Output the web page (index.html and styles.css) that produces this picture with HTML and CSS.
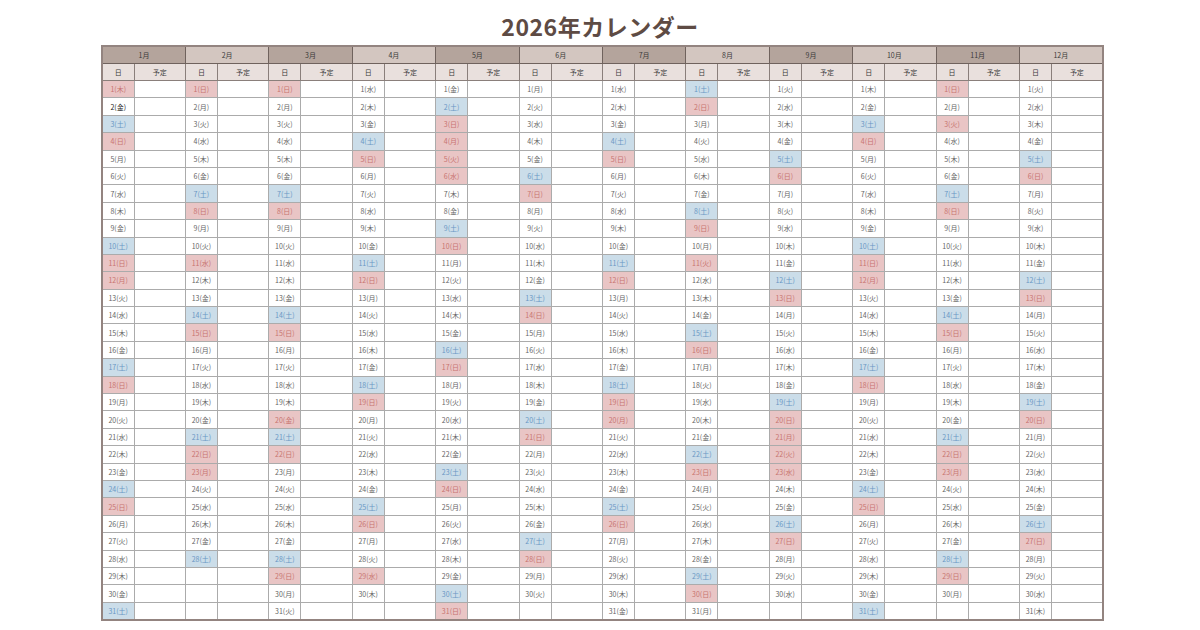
FILE: index.html
```html
<!DOCTYPE html>
<html lang="ja">
<head>
<meta charset="utf-8">
<title>2026年カレンダー</title>
<link rel="stylesheet" href="styles.css">
</head>
<body>
<h1 class="title">2026年カレンダー</h1>
<table class="cal" id="cal">
<colgroup id="cols"></colgroup>
<thead>
<tr class="mrow" id="mrow"></tr>
<tr class="srow" id="srow"></tr>
</thead>
<tbody id="body"></tbody>
</table>
<script src="script.js"></script>
</body>
</html>
```

FILE: styles.css
```css
html, body {
  margin: 0;
  padding: 0;
  background: #ffffff;
}
body {
  font-family: "Noto Sans CJK JP", "Noto Sans", sans-serif;
  width: 1200px;
}
.title {
  margin: 10px 0 0 0;
  height: 35px;
  line-height: 32px;
  text-align: center;
  font-size: 23px;
  font-weight: 700;
  color: #5e4b44;
  letter-spacing: 0.5px;
}
.cal {
  margin-left: 101px;
  border-collapse: collapse;
  table-layout: fixed;
  width: 1001px;
  border: 2px solid #938480;
}
.c-d { width: 32px; }
.c-p { width: 51.4px; }
.cal th, .cal td {
  padding: 0;
  font-size: 7px;
  text-align: center;
  vertical-align: middle;
  overflow: hidden;
  white-space: nowrap;
}
.mrow th {
  height: 16px;
  font-weight: 400;
  color: #3a3a3a;
  border: 1px solid #6f625d;
}
.mrow .odd { background: #b4a49c; }
.mrow .even { background: #d3c6c0; }
.srow th {
  height: 16px;
  font-weight: 400;
  color: #3a3a3a;
  background: #e9e0dd;
  border: 1px solid #8a7f7b;
}
.cal td {
  height: 16.4px;
  border: 1px solid #ababab;
  color: #666;
}
.cal td.mb { border-left: 1px solid #766a66; }
.cal td.sat { background: #cbdde9; color: #6a97c4; }
.cal td.sun { background: #e9c5c5; color: #c87470; }
.cal td.strong { color: #222; }
```

FILE: script.js
```js
(function () {
  var wd = ["日", "月", "火", "水", "木", "金", "土"];
  var days = [31, 28, 31, 30, 31, 30, 31, 31, 30, 31, 30, 31];
  var holidays = {
    "1-1": 1, "1-12": 1, "2-11": 1, "2-23": 1, "3-20": 1, "4-29": 1,
    "5-3": 1, "5-4": 1, "5-5": 1, "5-6": 1, "7-20": 1, "8-11": 1,
    "9-21": 1, "9-22": 1, "9-23": 1, "10-12": 1, "11-3": 1, "11-23": 1
  };
  var cols = document.getElementById("cols");
  var mrow = document.getElementById("mrow");
  var srow = document.getElementById("srow");
  var body = document.getElementById("body");
  var m, d;
  for (m = 1; m <= 12; m++) {
    var c1 = document.createElement("col");
    c1.className = "c-d";
    var c2 = document.createElement("col");
    c2.className = "c-p";
    cols.appendChild(c1);
    cols.appendChild(c2);
    var th = document.createElement("th");
    th.colSpan = 2;
    th.className = m % 2 ? "odd" : "even";
    th.textContent = m + "月";
    mrow.appendChild(th);
    var s1 = document.createElement("th");
    s1.textContent = "日";
    var s2 = document.createElement("th");
    s2.textContent = "予定";
    srow.appendChild(s1);
    srow.appendChild(s2);
  }
  for (d = 1; d <= 31; d++) {
    var tr = document.createElement("tr");
    for (m = 1; m <= 12; m++) {
      var td = document.createElement("td");
      td.className = "mb";
      var tp = document.createElement("td");
      if (d <= days[m - 1]) {
        var w = new Date(2026, m - 1, d).getDay();
        td.textContent = d + "(" + wd[w] + ")";
        if (w === 0 || holidays[m + "-" + d]) td.className += " sun";
        else if (w === 6) td.className += " sat";
        if (m === 1 && d === 2) td.className += " strong";
      }
      tr.appendChild(td);
      tr.appendChild(tp);
    }
    body.appendChild(tr);
  }
})();
```
